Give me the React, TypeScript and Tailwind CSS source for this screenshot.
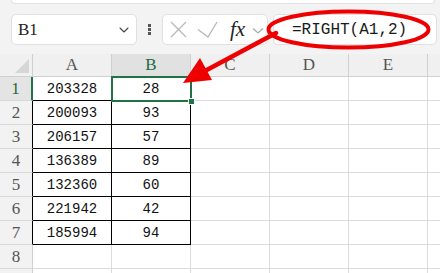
import { ChevronDown } from 'lucide-react'

const cols = ['A', 'B', 'C', 'D', 'E']
const data: [string, string][] = [
  ['203328', '28'],
  ['200093', '93'],
  ['206157', '57'],
  ['136389', '89'],
  ['132360', '60'],
  ['221942', '42'],
  ['185994', '94'],
]

const serif = { fontFamily: '"Liberation Serif", "DejaVu Serif", serif' }

function RowHeader({ n }: { n: number }) {
  const active = n === 1
  const inTable = n >= 2 && n <= 7
  return (
    <div
      style={serif}
      className={
        'w-[33px] shrink-0 flex items-center justify-center text-[17px] border-b border-[#d8d8d8] ' +
        (active
          ? 'bg-[#e4e4e4] text-[#1e6b3f] border-r-2 border-r-[#217346]'
          : inTable
            ? 'bg-[#f2f2f2] text-[#555] border-r border-r-black'
            : 'bg-[#f2f2f2] text-[#555] border-r border-r-[#d0d0d0]')
      }
    >
      {n < 9 ? n : ''}
    </div>
  )
}

export default function App() {
  const rows = Array.from({ length: 9 }, (_, i) => i + 1)
  return (
    <div
      className="relative w-[440px] h-[273px] overflow-hidden bg-[#f3f3f3]"
      style={{ fontFamily: '"Liberation Sans", Arial, sans-serif' }}
    >
      {/* toolbar */}
      <div className="h-[54px]">
        <div className="ml-[11px] mr-[5px] h-[4px] bg-white rounded-b-md border-x border-b border-[#e2e2e2]" />
        <div className="flex items-center mt-[10px] h-[31px]">
          <div className="ml-[11px] w-[126px] h-full bg-white border border-[#e0e0e0] rounded-[5px] flex items-center justify-between pl-[6px] pr-[4px]">
            <span style={serif} className="text-[17px] text-[#222]">B1</span>
            <ChevronDown size={16} strokeWidth={1.6} className="text-[#444]" />
          </div>
          <div className="w-[25px] flex flex-col items-center gap-[1.5px]">
            <span className="w-[3px] h-[2.5px] bg-[#555]" />
            <span className="w-[3px] h-[2.5px] bg-[#555]" />
            <span className="w-[3px] h-[2.5px] bg-[#555]" />
          </div>
          <div className="w-[106px] h-full bg-white border border-[#e0e0e0] rounded-[5px] flex items-center">
            <svg width="62" height="29" viewBox="0 0 62 29" className="shrink-0">
              <g stroke="#b8b8b8" strokeWidth="1.3" fill="none">
                <path d="M8 7 L23 22 M23 7 L8 22" />
                <path d="M35 14.5 L45 22 L54 7" />
              </g>
            </svg>
            <span style={serif} className="italic text-[21px] text-[#222] ml-[5px] leading-none">fx</span>
            <svg width="12" height="8" viewBox="0 0 12 8" className="ml-[7px] mt-[3px]">
              <path d="M1 1.5 L6 6 L11 1.5" stroke="#aaa" strokeWidth="1.3" fill="none" />
            </svg>
          </div>
          <div className="ml-[5px] w-[164px] h-full bg-white border border-[#e0e0e0] rounded-[5px] flex items-center pl-[18px]">
            <span className="text-[16px] text-[#1a1a1a] mt-[1px]" style={{ fontFamily: '"Liberation Mono", "DejaVu Sans Mono", monospace' }}>
              =RIGHT(A1,2)
            </span>
          </div>
        </div>
      </div>

      {/* sheet */}
      <div className="relative bg-white">
        <div className="flex h-[23px] bg-[#f0f0f0]">
          <div className="w-[33px] shrink-0 relative border-r border-b border-[#d0d0d0]">
            <svg className="absolute right-[3px] bottom-[3px]" width="14" height="14" viewBox="0 0 14 14">
              <polygon points="14,0 14,14 0,14" fill="#d6d6d6" />
            </svg>
          </div>
          {cols.map((c) => (
            <div
              key={c}
              style={serif}
              className={
                'w-[79px] shrink-0 flex items-center justify-center text-[17px] border-r border-b border-[#d0d0d0] ' +
                (c === 'B' ? 'bg-[#e1e1e1] text-[#1e6b3f]' : 'text-[#555]')
              }
            >
              {c}
            </div>
          ))}
          <div className="flex-1 border-b border-[#d0d0d0]" />
        </div>
        {rows.map((n) => {
          const d = data[n - 1]
          return (
            <div key={n} className="flex h-[24px]">
              <RowHeader n={n} />
              {cols.map((c, ci) => {
                const inTable = d && ci < 2
                return (
                  <div
                    key={c}
                    className={
                      'w-[79px] shrink-0 flex items-center justify-center text-[14px] text-[#111] pt-[2px] border-r border-b ' +
                      (inTable ? 'border-r-black border-b-black' : 'border-r-[#dcdcdc] border-b-[#dcdcdc]')
                    }
                    style={{ fontFamily: '"Liberation Mono", "DejaVu Sans Mono", monospace' }}
                  >
                    {inTable ? d[ci] : ''}
                  </div>
                )
              })}
              <div className="flex-1 border-b border-[#dcdcdc]" />
            </div>
          )
        })}

        {/* selection B1 */}
        <div className="absolute left-[111px] top-[22px] w-[81px] h-[26px] border-2 border-[#217346] pointer-events-none" />
        <div className="absolute left-[188px] top-[44px] w-[7px] h-[7px] bg-[#217346] border border-white" />
      </div>

      {/* annotation */}
      <svg className="absolute inset-0 pointer-events-none" width="440" height="273" viewBox="0 0 440 273">
        <ellipse cx="348.5" cy="29.5" rx="80" ry="18" fill="none" stroke="#ee0000" strokeWidth="4" />
        <line x1="276" y1="33" x2="203" y2="72" stroke="#ee0000" strokeWidth="4.5" strokeLinecap="round" />
        <polygon points="183,83 200,58 212,80" fill="#ee0000" />
      </svg>
    </div>
  )
}
